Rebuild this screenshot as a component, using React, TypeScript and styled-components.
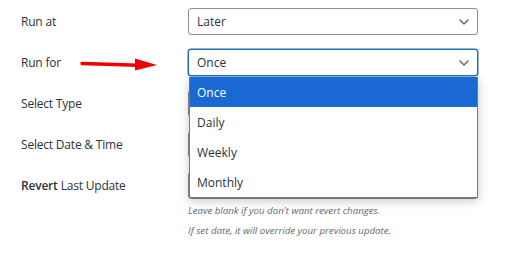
import React, { FC } from "react"
import styled, { createGlobalStyle } from "styled-components"

const GlobalStyle = createGlobalStyle`
  html, body {
    margin: 0;
    padding: 0;
    background: #ffffff;
  }
  body {
    font-family: "Open Sans", "Noto Sans", sans-serif;
    color: #1d2327;
  }
`

const options = ["Once", "Daily", "Weekly", "Monthly"]

const Chevron: FC = () => (
  <svg width="10" height="6" viewBox="0 0 10 6" fill="none">
    <path d="M1 1l4 4 4-4" stroke="#50575e" strokeWidth="1.2" strokeLinecap="round" strokeLinejoin="round" />
  </svg>
)

const RedArrow: FC = () => (
  <ArrowSvg width="80" height="16" viewBox="0 0 80 16">
    <path d="M2 5.5 L58 7.2" stroke="#f00000" strokeWidth="3.4" strokeLinecap="round" />
    <path d="M55 0.5 L77 7 L55 12.5 Z" fill="#f00000" />
  </ArrowSvg>
)

const App: FC = () => {
  return (
    <>
      <GlobalStyle />
      <Form>
        <Label>Run at</Label>
        <Field>
          <Select>
            <span>Later</span>
            <Chevron />
          </Select>
        </Field>

        <Label>
          Run for
          <RedArrow />
        </Label>
        <Field>
          <Select focused>
            <span>Once</span>
            <Chevron />
          </Select>
          <Listbox>
            {options.map((opt, i) => (
              <Option key={opt} active={i === 0}>
                {opt}
              </Option>
            ))}
          </Listbox>
        </Field>

        <Label>Select Type</Label>
        <Field>
          <Select />
        </Field>

        <Label>Select Date &amp; Time</Label>
        <Field>
          <Select />
        </Field>

        <Label>
          <strong>Revert</strong> Last Update
        </Label>
        <Field>
          <Select />
          <Help>Leave blank if you don't want revert changes.</Help>
          <Help>If set date, it will override your previous update.</Help>
        </Field>
      </Form>
    </>
  )
}

const Form = styled.div`
  display: grid;
  grid-template-columns: 167px 290px;
  row-gap: 14px;
  padding: 8px 0 0 21px;
  align-items: start;
`

const Label = styled.div`
  position: relative;
  height: 27px;
  display: flex;
  align-items: center;
  font-size: 12px;
  letter-spacing: -0.2px;
  color: #2c3338;
  strong {
    font-weight: 600;
    margin-right: 3px;
  }
`

const ArrowSvg = styled.svg`
  position: absolute;
  left: 59px;
  top: 9px;
`

const Field = styled.div`
  position: relative;
  display: flex;
  flex-direction: column;
`

const Select = styled.div<{ focused?: boolean }>`
  box-sizing: border-box;
  height: 27px;
  display: flex;
  align-items: center;
  justify-content: space-between;
  padding: 0 8px 0 8px;
  border: 1px solid ${p => (p.focused ? "#2271b1" : "#8c8f94")};
  box-shadow: ${p => (p.focused ? "0 0 0 0.5px #2271b1" : "none")};
  border-radius: 3px;
  background: #fff;
  font-size: 12px;
  color: #2c3338;
`

const Listbox = styled.ul`
  position: absolute;
  top: 28px;
  left: 1px;
  right: 0;
  margin: 0;
  padding: 0;
  list-style: none;
  background: #fff;
  border: 1px solid #767676;
  border-top: none;
  box-shadow: 0 3px 9px rgba(0, 0, 0, 0.22);
  z-index: 2;
`

const Option = styled.li<{ active?: boolean }>`
  height: 30px;
  display: flex;
  align-items: center;
  padding-left: 7px;
  font-size: 12px;
  background: ${p => (p.active ? "#1a68d4" : "#fff")};
  color: ${p => (p.active ? "#ffffff" : "#2c3338")};
`

const Help = styled.p`
  margin: 3px 0 0 0;
  font-size: 9.7px;
  line-height: 17px;
  font-style: italic;
  color: #646970;
  & + & {
    margin-top: 3px;
  }
`

export default App
